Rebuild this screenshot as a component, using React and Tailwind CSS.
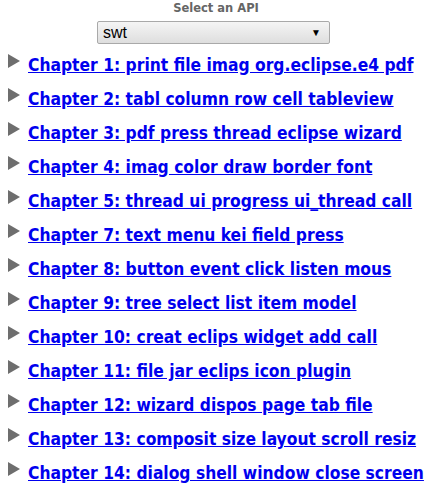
import React from 'react';

const chapters = [
  'Chapter 1: print file imag org.eclipse.e4 pdf',
  'Chapter 2: tabl column row cell tableview',
  'Chapter 3: pdf press thread eclipse wizard',
  'Chapter 4: imag color draw border font',
  'Chapter 5: thread ui progress ui_thread call',
  'Chapter 7: text menu kei field press',
  'Chapter 8: button event click listen mous',
  'Chapter 9: tree select list item model',
  'Chapter 10: creat eclips widget add call',
  'Chapter 11: file jar eclips icon plugin',
  'Chapter 12: wizard dispos page tab file',
  'Chapter 13: composit size layout scroll resiz',
  'Chapter 14: dialog shell window close screen',
];

function Arrow() {
  return (
    <svg width="12" height="14" viewBox="0 0 12 14" className="shrink-0">
      <polygon points="0,0 12,7 0,14" fill="#6e6e6e" />
    </svg>
  );
}

export default function App() {
  return (
    <div className="w-[432px] h-[487px] bg-white overflow-hidden">
      <div className="flex flex-col items-center pt-[1px]">
        <div className="text-[11.5px] font-bold text-[#666] leading-[14px] font-['DejaVu_Sans',sans-serif]">
          Select an API
        </div>
        <div className="mt-[6px] w-[233px] h-[23px] ml-[-5px] flex items-center justify-between pl-[5px] pr-[8px] border border-[#a9a9a9] rounded-[2px] bg-gradient-to-b from-[#f5f5f5] to-[#dedede] font-['Liberation_Sans',sans-serif] text-[16px] text-black">
          <span>swt</span>
          <span className="text-[10px]">▼</span>
        </div>
      </div>
      <ul className="mt-[10px] pl-[8px] flex flex-col">
        {chapters.map((c) => (
          <li key={c} className="flex items-start h-[34px] gap-[8px]">
            <Arrow />
            <a
              href="#"
              className="text-[17.3px] font-bold leading-[22px] text-[#0000ee] underline font-['DejaVu_Sans_Condensed','DejaVu_Sans',sans-serif] whitespace-nowrap"
            >
              {c}
            </a>
          </li>
        ))}
      </ul>
    </div>
  );
}
